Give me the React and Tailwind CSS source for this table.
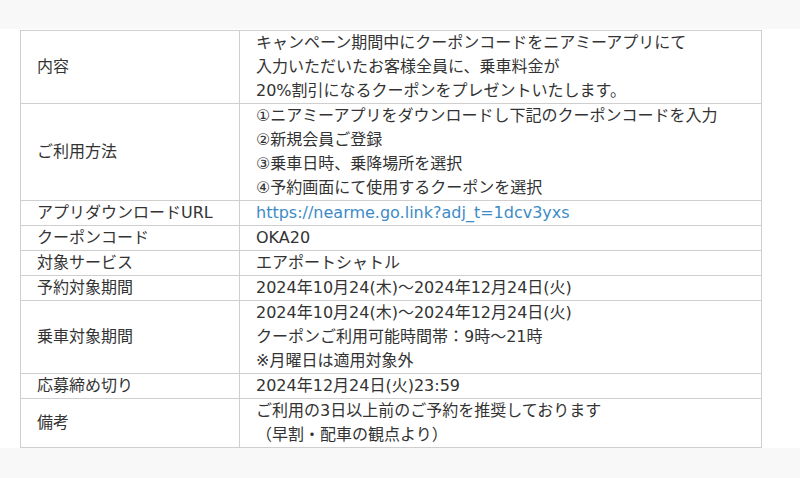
import React from "react";

const ROWS = [
  {
    label: "内容",
    lines: [
      "キャンペーン期間中にクーポンコードをニアミーアプリにて",
      "入力いただいたお客様全員に、乗車料金が",
      "20%割引になるクーポンをプレゼントいたします。",
    ],
  },
  {
    label: "ご利用方法",
    lines: [
      "①ニアミーアプリをダウンロードし下記のクーポンコードを入力",
      "②新規会員ご登録",
      "③乗車日時、乗降場所を選択",
      "④予約画面にて使用するクーポンを選択",
    ],
  },
  {
    label: "アプリダウンロードURL",
    link: "https://nearme.go.link?adj_t=1dcv3yxs",
  },
  { label: "クーポンコード", lines: ["OKA20"] },
  { label: "対象サービス", lines: ["エアポートシャトル"] },
  { label: "予約対象期間", lines: ["2024年10月24(木)〜2024年12月24日(火)"] },
  {
    label: "乗車対象期間",
    lines: [
      "2024年10月24(木)〜2024年12月24日(火)",
      "クーポンご利用可能時間帯：9時〜21時",
      "※月曜日は適用対象外",
    ],
  },
  { label: "応募締め切り", lines: ["2024年12月24日(火)23:59"] },
  {
    label: "備考",
    lines: ["ご利用の3日以上前のご予約を推奨しております", "（早割・配車の観点より）"],
  },
];

export default function App() {
  return (
    <div
      className="min-h-[478px] w-full bg-[#f8f8f8] pt-[29px] text-[#333] text-[16px] leading-[24px]"
      style={{ fontFamily: '"DejaVu Sans", "Noto Sans CJK JP", sans-serif' }}
    >
      <div className="bg-white pt-px">
        <table className="ml-[20px] w-[742px] border-collapse">
          <tbody>
            {ROWS.map((row) => (
              <tr key={row.label}>
                <td className="w-[219px] border border-[#cfcfcf] pl-4 align-middle whitespace-nowrap">
                  {row.label}
                </td>
                <td className="border border-[#cfcfcf] pl-4 align-middle whitespace-nowrap">
                  {row.link ? (
                    <a href="#" className="text-[#3d8bc6]">
                      {row.link}
                    </a>
                  ) : (
                    row.lines.map((l, i) => <div key={i}>{l}</div>)
                  )}
                </td>
              </tr>
            ))}
          </tbody>
        </table>
      </div>
    </div>
  );
}
